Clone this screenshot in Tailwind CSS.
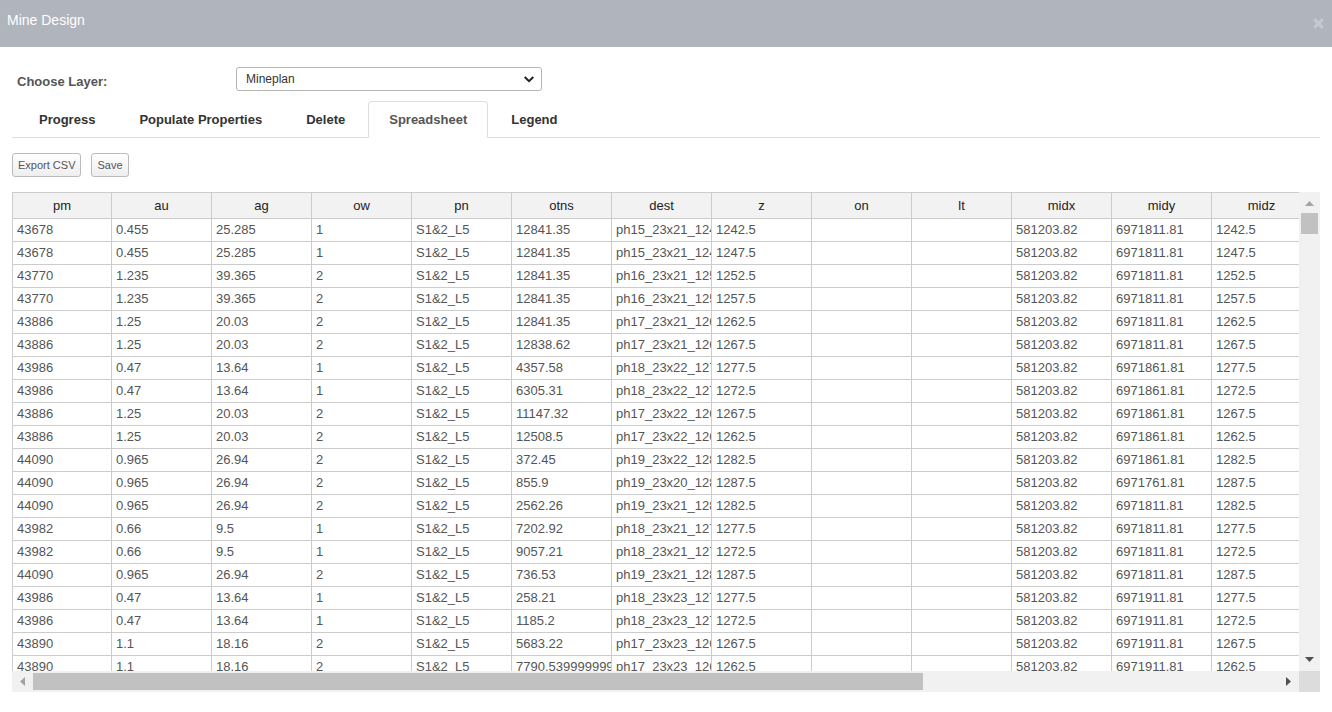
<!DOCTYPE html>
<html lang="en">
<head>
<meta charset="utf-8">
<title>Mine Design</title>
<script src="https://cdn.jsdelivr.net/npm/@tailwindcss/browser@4"></script>
</head>
<body class="bg-white font-['Liberation_Sans',Arial,sans-serif] text-[13px] text-[#555]">
<div class="flex h-screen flex-col">
  <header class="flex h-[47px] shrink-0 items-start justify-between bg-[#b0b4bd] pl-[7px] pr-2">
    <h1 class="pt-[10px] text-[14px] leading-5 text-white">Mine Design</h1>
    <button type="button" aria-label="Close" class="pt-[18px]">
      <svg class="block" width="11" height="11" viewBox="0 0 11 11" fill="none" stroke="#c3c8d1" stroke-width="3.2"><path d="M1.2 1.2l8.6 8.6M9.8 1.2L1.2 9.8"/></svg>
    </button>
  </header>
  <main class="flex min-h-0 flex-1 flex-col px-3 pb-5 pt-5">
    <div class="flex items-start pl-[5px]">
      <label for="layer" class="w-[219px] pt-[5px] font-bold leading-5">Choose Layer:</label>
      <div class="relative -mb-px w-[306px]">
        <select id="layer" class="block h-6 w-full appearance-none rounded-[3px] border border-[#b5b5b5] bg-white pl-[9px] pr-7 text-[12px] text-[#333]">
          <option>Mineplan</option>
        </select>
        <svg class="pointer-events-none absolute right-2 top-[9px]" width="10" height="7" viewBox="0 0 10 7" fill="none" stroke="#222" stroke-width="2"><path d="M.7 1L5 5.2 9.3 1"/></svg>
      </div>
    </div>
    <nav class="mt-[9px] flex shrink-0 border-b border-[#ddd] pl-[5px] font-bold leading-5 text-[#333]">
      <button type="button" class="-mb-px h-[37px] border border-transparent px-[21px]">Progress</button>
      <button type="button" class="-mb-px h-[37px] border border-transparent px-[21px]">Populate Properties</button>
      <button type="button" class="-mb-px h-[37px] border border-transparent px-[21px]">Delete</button>
      <button type="button" class="mx-px -mb-px h-[37px] rounded-t border border-[#ddd] border-b-white bg-white px-5 text-[#555]">Spreadsheet</button>
      <button type="button" class="-mb-px h-[37px] border border-transparent px-[21px]">Legend</button>
    </nav>
    <div class="mt-[15px] flex shrink-0 gap-[10px] text-[11px]">
      <button type="button" class="h-6 rounded-[3px] border border-[#bbb] bg-linear-to-b from-white to-[#eee] px-[5px]">Export CSV</button>
      <button type="button" class="h-6 rounded-[3px] border border-[#bbb] bg-linear-to-b from-white to-[#eee] px-[5px]">Save</button>
    </div>
    <div class="mt-[15px] grid min-h-0 flex-1 grid-cols-[minmax(0,1fr)_21px] grid-rows-[minmax(0,1fr)_21px]">
      <div class="overflow-hidden">
        <table class="w-[1300px] table-fixed border-separate border-spacing-0 border-l border-t border-[#ccc] leading-[22px] [&_td]:h-[23px] [&_td]:overflow-hidden [&_td]:border-b [&_td]:border-r [&_td]:border-[#ccc] [&_td]:whitespace-nowrap [&_td]:px-1 [&_th]:h-[26px] [&_th]:border-b [&_th]:border-r [&_th]:border-[#ccc] [&_th]:bg-[#f2f2f2] [&_th]:font-normal [&_th]:text-[#222] [&_th:first-child]:w-[99px]">
          <thead><tr><th>pm</th><th>au</th><th>ag</th><th>ow</th><th>pn</th><th>otns</th><th>dest</th><th>z</th><th>on</th><th>lt</th><th>midx</th><th>midy</th><th>midz</th></tr></thead>
          <tbody id="rows"></tbody>
        </table>
      </div>
      <div class="flex flex-col items-center bg-[#f1f1f1]">
        <svg class="h-[21px] shrink-0" width="9" height="21" viewBox="0 0 9 21" fill="#a3a3a3"><path d="M0 14L4.5 9 9 14z"/></svg>
        <div class="h-[21px] w-[17px] bg-[#c1c1c1]"></div>
        <svg class="mt-auto h-[21px] shrink-0" width="9" height="21" viewBox="0 0 9 21" fill="#505050"><path d="M0 7h9L4.5 12z"/></svg>
      </div>
      <div class="flex items-center bg-[#f1f1f1]">
        <svg class="shrink-0" width="21" height="21" viewBox="0 0 21 21" fill="#a3a3a3"><path d="M13 6v9L8 10.500z"/></svg>
        <div class="flex-1"><div class="h-[17px] w-[71.5%] bg-[#c1c1c1]"></div></div>
        <svg class="shrink-0" width="21" height="21" viewBox="0 0 21 21" fill="#505050"><path d="M8 6v9l5-4.500z"/></svg>
      </div>
      <div class="bg-[#dcdcdc]"></div>
    </div>
  </main>
</div>
<script>
// pm, au, ag, ow, otns, dest prefix, z, midy
const blocks = [
  ['43678','0.455','25.285','1','12841.35','ph15_23x21','1242.5','6971811.81'],
  ['43678','0.455','25.285','1','12841.35','ph15_23x21','1247.5','6971811.81'],
  ['43770','1.235','39.365','2','12841.35','ph16_23x21','1252.5','6971811.81'],
  ['43770','1.235','39.365','2','12841.35','ph16_23x21','1257.5','6971811.81'],
  ['43886','1.25','20.03','2','12841.35','ph17_23x21','1262.5','6971811.81'],
  ['43886','1.25','20.03','2','12838.62','ph17_23x21','1267.5','6971811.81'],
  ['43986','0.47','13.64','1','4357.58','ph18_23x22','1277.5','6971861.81'],
  ['43986','0.47','13.64','1','6305.31','ph18_23x22','1272.5','6971861.81'],
  ['43886','1.25','20.03','2','11147.32','ph17_23x22','1267.5','6971861.81'],
  ['43886','1.25','20.03','2','12508.5','ph17_23x22','1262.5','6971861.81'],
  ['44090','0.965','26.94','2','372.45','ph19_23x22','1282.5','6971861.81'],
  ['44090','0.965','26.94','2','855.9','ph19_23x20','1287.5','6971761.81'],
  ['44090','0.965','26.94','2','2562.26','ph19_23x21','1282.5','6971811.81'],
  ['43982','0.66','9.5','1','7202.92','ph18_23x21','1277.5','6971811.81'],
  ['43982','0.66','9.5','1','9057.21','ph18_23x21','1272.5','6971811.81'],
  ['44090','0.965','26.94','2','736.53','ph19_23x21','1287.5','6971811.81'],
  ['43986','0.47','13.64','1','258.21','ph18_23x23','1277.5','6971911.81'],
  ['43986','0.47','13.64','1','1185.2','ph18_23x23','1272.5','6971911.81'],
  ['43890','1.1','18.16','2','5683.22','ph17_23x23','1267.5','6971911.81'],
  ['43890','1.1','18.16','2','7790.539999999999','ph17_23x23','1262.5','6971911.81'],
];
const body = document.getElementById('rows');
for (const [pm, au, ag, ow, otns, dest, z, midy] of blocks) {
  const row = body.insertRow();
  for (const value of [pm, au, ag, ow, 'S1&2_L5', otns, dest + '_' + z, z, '', '', '581203.82', midy, z]) {
    row.insertCell().textContent = value;
  }
}
</script>
</body>
</html>
